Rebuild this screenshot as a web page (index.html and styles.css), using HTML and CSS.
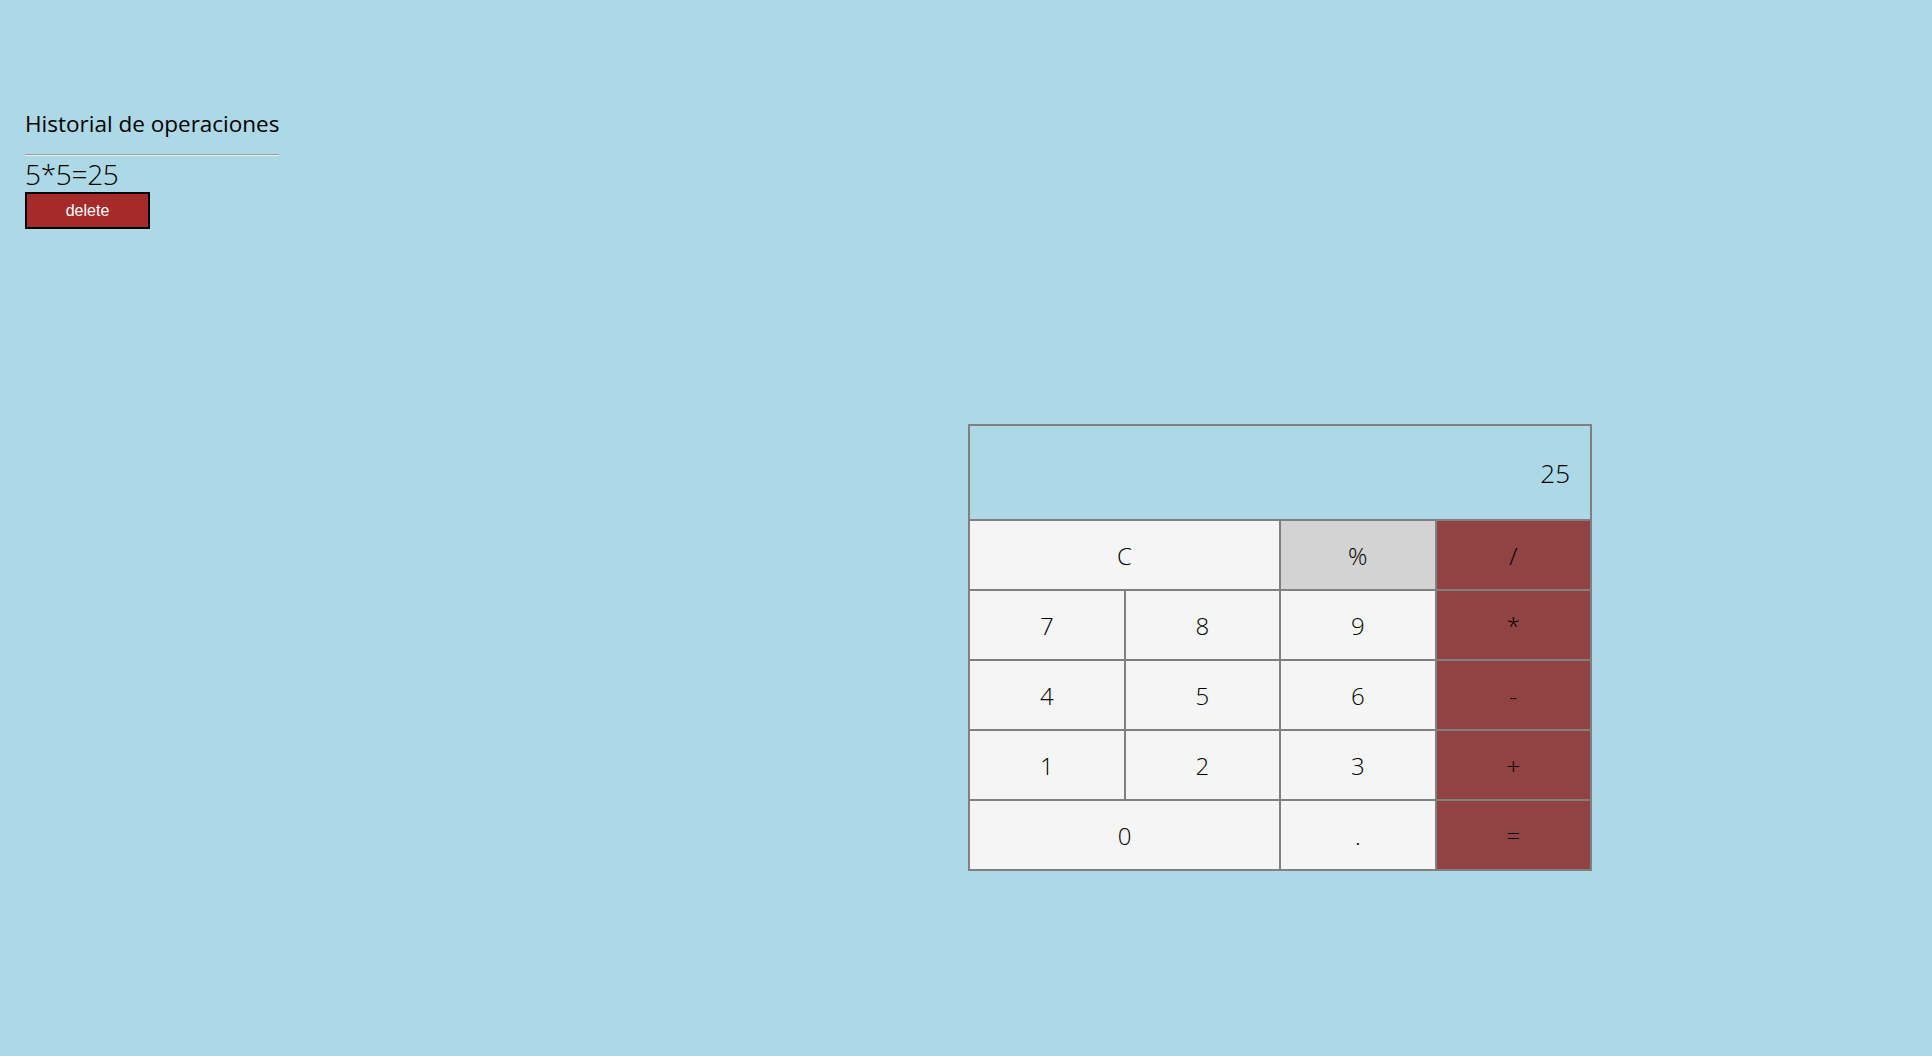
FILE: index.html
```html
<!DOCTYPE html>
<html lang="es">
<head>
<meta charset="utf-8">
<title>Calculadora</title>
<link rel="stylesheet" href="styles.css">
</head>
<body>
<div class="page">
  <section class="history">
    <h2 class="history-title">Historial de operaciones</h2>
    <hr class="history-rule">
    <div class="history-entry">5*5=25</div>
    <button class="delete-btn">delete</button>
  </section>
  <section class="calc">
    <div class="display">25</div>
    <div class="keys">
      <button class="key wide">C</button>
      <button class="key gray">%</button>
      <button class="key op">/</button>
      <button class="key">7</button>
      <button class="key">8</button>
      <button class="key">9</button>
      <button class="key op">*</button>
      <button class="key">4</button>
      <button class="key">5</button>
      <button class="key">6</button>
      <button class="key op">-</button>
      <button class="key">1</button>
      <button class="key">2</button>
      <button class="key">3</button>
      <button class="key op">+</button>
      <button class="key wide">0</button>
      <button class="key">.</button>
      <button class="key op">=</button>
    </div>
  </section>
</div>
</body>
</html>
```
FILE: styles.css
```css
html, body {
  margin: 0;
  padding: 0;
  background: #add8e6;
}
body {
  font-family: "Open Sans", "Noto Sans", sans-serif;
  color: #000;
}
.page {
  display: grid;
  grid-template-columns: 968px 624px;
  align-items: start;
}
.history {
  padding-left: 25px;
  display: flex;
  flex-direction: column;
  align-items: flex-start;
}
.history-title {
  margin: 109px 0 0 0;
  font-size: 22.5px;
  font-weight: 400;
  line-height: 30px;
  letter-spacing: 0;
  color: #000;
}
.history-rule {
  width: 254px;
  margin: 15px 0 0 0;
  border: 0;
  border-top: 1px solid #9a9a9a;
  border-bottom: 1px solid #eeeeee;
  height: 0;
  box-sizing: border-box;
}
.history-entry {
  font-size: 28px;
  font-weight: 300;
  line-height: 36px;
  letter-spacing: -0.3px;
  color: #000;
}
.delete-btn {
  width: 125px;
  height: 37px;
  margin: 0;
  border: 2px solid #000;
  background: #a52a2a;
  color: #fff;
  font-family: "Liberation Sans", Arial, sans-serif;
  font-size: 16px;
  padding: 0;
}
.calc {
  margin-top: 424px;
  width: 624px;
  box-sizing: border-box;
  border: 1px solid #808080;
}
.display {
  box-sizing: border-box;
  width: 622px;
  height: 95px;
  border: 1px solid #808080;
  display: flex;
  align-items: center;
  justify-content: flex-end;
  padding-right: 20px;
  font-size: 26px;
  font-weight: 300;
  color: #000;
}
.keys {
  display: grid;
  grid-template-columns: repeat(4, 1fr);
  grid-auto-rows: 70px;
}
.key {
  box-sizing: border-box;
  margin: 0;
  padding: 0;
  border: 1px solid #808080;
  background: #f5f5f5;
  font-family: "Open Sans", "Noto Sans", sans-serif;
  font-size: 24px;
  font-weight: 300;
  color: #000;
}
.key.wide {
  grid-column: span 2;
}
.key.gray {
  background: #d3d3d3;
}
.key.op {
  background: #914343;
}
```
